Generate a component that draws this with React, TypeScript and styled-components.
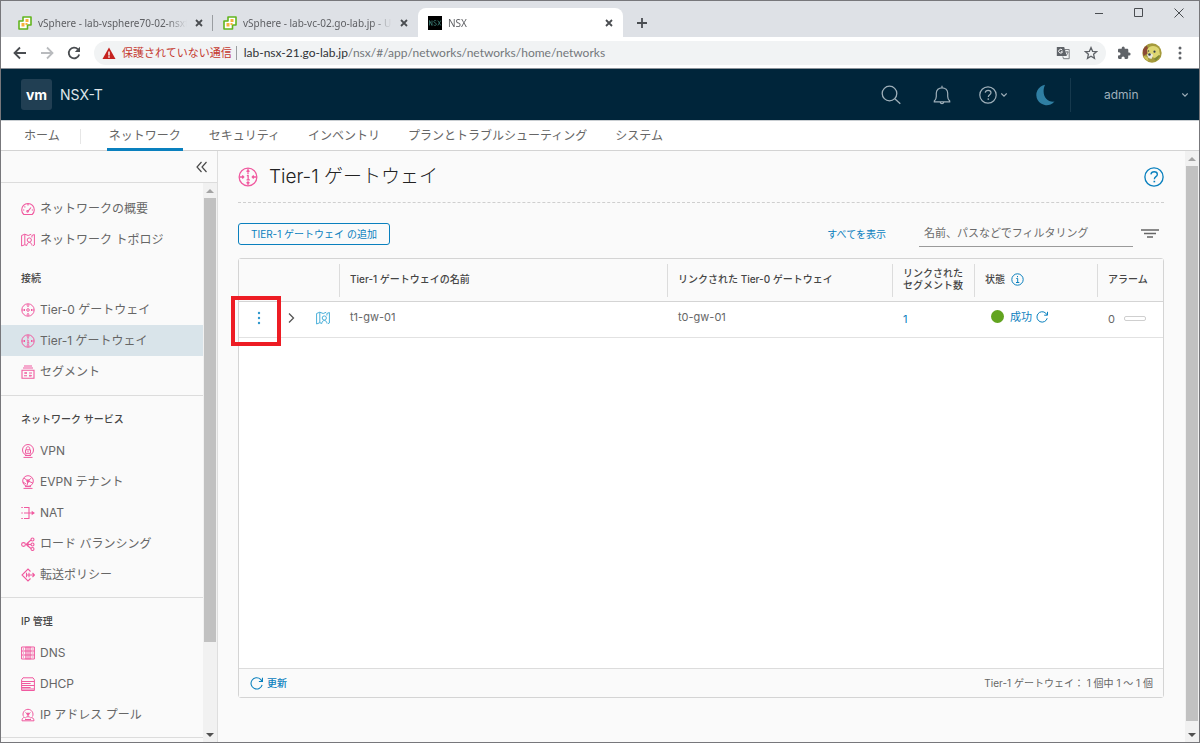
import React from "react";
import styled, { createGlobalStyle } from "styled-components";

const uiFont = `Inter, "Noto Sans CJK JP", sans-serif`;
const chromeFont = `"Noto Sans", "Noto Sans CJK JP", sans-serif`;
const urlFont = `Lato, "Noto Sans CJK JP", sans-serif`;

const c = {
  frame: "#77777b",
  strip: "#dee1e6",
  header: "#00253a",
  page: "#fafafa",
  line: "#dcdcdc",
  text: "#666",
  strong: "#454545",
  blue: "#0a80be",
  sky: "#49afd9",
  pink: "#f0599f",
};

const GlobalStyle = createGlobalStyle`
  *, *::before, *::after { box-sizing: border-box; }
  html, body { margin: 0; padding: 0; }
  body { font-family: ${uiFont}; font-size: 12px; color: ${c.text}; overflow: hidden; }
  button, input { font: inherit; color: inherit; margin: 0; }
  button { background: none; border: 0; padding: 0; }
  a { text-decoration: none; color: inherit; }
  svg { display: block; flex: none; }
`;

/* ---------- browser window ---------- */

const Window = styled.div`
  height: 100vh;
  display: flex;
  flex-direction: column;
  border: 1px solid ${c.frame};
  background: ${c.page};
`;

const TabStrip = styled.div`
  height: 36px;
  flex: none;
  display: flex;
  align-items: flex-end;
  background: ${c.strip};
  padding-left: 7px;
  font-family: ${chromeFont};
  font-size: 10px;
`;

const Tab = styled.div<{ $active?: boolean; $divided?: boolean }>`
  position: relative;
  width: 205px;
  height: 29px;
  display: flex;
  align-items: center;
  gap: 6px;
  padding: 0 8px 0 10px;
  border-radius: 8px 8px 0 0;
  background: ${(p) => (p.$active ? "#fff" : "transparent")};
  &::after {
    content: "";
    display: ${(p) => (p.$divided ? "block" : "none")};
    position: absolute;
    right: 0;
    top: 7px;
    height: 16px;
    border-right: 1px solid #9a9da1;
  }
`;

const TabTitle = styled.span`
  flex: 1;
  min-width: 0;
  white-space: nowrap;
  line-height: 16px;
  color: #5f6064;
  mask-image: linear-gradient(to right, #000 calc(100% - 20px), transparent);
`;

const ChromeButton = styled.button<{ $w?: number }>`
  display: flex;
  align-items: center;
  justify-content: center;
  width: ${(p) => p.$w ?? 12}px;
  height: 16px;
  color: #4a4d51;
`;

const NewTab = styled(ChromeButton)`
  margin: 0 0 6px 13px;
`;

const WindowControls = styled.div`
  margin-left: auto;
  align-self: flex-start;
  display: flex;
  padding-top: 4px;
`;

const Toolbar = styled.div`
  height: 32px;
  flex: none;
  display: flex;
  align-items: center;
  background: #fff;
  border-bottom: 1px solid #8b9199;
  padding: 0 9px 0 5px;
  font-family: ${chromeFont};
`;

const Omnibox = styled.div`
  flex: 1;
  height: 24px;
  margin: 0 8px 0 7px;
  padding: 0 1px 0 8px;
  display: flex;
  align-items: center;
  border-radius: 12px;
  background: #f1f3f4;
`;

const Insecure = styled.span`
  font-size: 11px;
  line-height: 20px;
  color: #c5392f;
  margin: 0 4px 0 6px;
`;

const OmniDivider = styled.span`
  width: 1px;
  height: 14px;
  margin-right: 7px;
  background: #9a9da1;
`;

const Url = styled.span`
  flex: 1;
  font-family: ${urlFont};
  font-size: 12px;
  line-height: 20px;
  color: #73777b;
  white-space: nowrap;
  b { font-weight: 400; color: #303236; }
`;

/* ---------- application header ---------- */

const Header = styled.header`
  height: 52px;
  flex: none;
  display: flex;
  align-items: center;
  background: ${c.header};
  border-bottom: 1px solid #c9ced2;
  padding-left: 20px;
  color: #9fb0ba;
`;

const Logo = styled.span`
  width: 31px;
  height: 31px;
  display: grid;
  place-items: center;
  border-radius: 3px;
  background: #213f53;
  color: #fff;
  font-size: 14px;
  line-height: 16px;
  font-weight: 700;
`;

const Product = styled.span`
  margin-left: 8px;
  flex: 1;
  font-size: 14px;
  line-height: 20px;
  color: #dfe5e9;
`;

const HeaderButton = styled.button<{ $w?: number }>`
  width: ${(p) => p.$w ?? 51}px;
  height: 34px;
  display: flex;
  align-items: center;
  justify-content: center;
  gap: 4px;
`;

const UserButton = styled.button`
  width: 129px;
  height: 34px;
  display: flex;
  align-items: center;
  justify-content: space-between;
  border-left: 1px solid #16394d;
  padding: 0 11px 0 33px;
  font-size: 12px;
`;

const MainNav = styled.nav`
  height: 30px;
  flex: none;
  display: flex;
  gap: 24px;
  padding-left: 21px;
  background: #fff;
  border-bottom: 1px solid #d3d3d3;
`;

const NavLink = styled.a<{ $active?: boolean; $home?: boolean }>`
  position: relative;
  height: 30px;
  line-height: 30px;
  font-size: 12px;
  color: #666;
  box-shadow: ${(p) => (p.$active ? `inset 0 -3px ${c.blue}` : "none")};
  padding: 0 2px;
  margin-right: ${(p) => (p.$home ? 21 : 0)}px;
  &::after {
    content: "";
    display: ${(p) => (p.$home ? "block" : "none")};
    position: absolute;
    left: 58px;
    top: 8px;
    height: 15px;
    border-left: 1px solid #e6e6e6;
  }
`;

/* ---------- body ---------- */

const Body = styled.div`
  flex: 1;
  min-height: 0;
  display: flex;
`;

const Sidebar = styled.aside`
  width: 217px;
  flex: none;
  display: flex;
  flex-direction: column;
  border-right: 1px solid #dedede;
`;

const Collapse = styled.button`
  height: 32px;
  flex: none;
  display: flex;
  align-items: center;
  justify-content: flex-end;
  padding-right: 9px;
  border-bottom: 1px solid ${c.line};
  color: #4a4a4a;
`;

const SideScroll = styled.div`
  flex: 1;
  min-height: 0;
  display: flex;
`;

const SideList = styled.div`
  flex: 1;
  overflow: hidden;
  padding-top: 10px;
`;

const Section = styled.section`
  padding-bottom: 8px;
  & + & { border-top: 1px solid ${c.line}; padding-bottom: 7px; }
`;

const SideHeading = styled.h2`
  margin: 0;
  height: 39px;
  padding: 15px 0 0 20px;
  font-size: 10px;
  line-height: 16px;
  font-weight: 500;
  color: ${c.strong};
`;

const SideItem = styled.a<{ $active?: boolean }>`
  height: 31px;
  display: flex;
  align-items: center;
  gap: 5px;
  padding-left: 20px;
  font-size: 12px;
  line-height: 20px;
  background: ${(p) => (p.$active ? "#d9e4ea" : "transparent")};
  svg { color: ${c.pink}; }
`;

const Track = styled.div`
  width: 14px;
  flex: none;
  display: flex;
  flex-direction: column;
  background: #f1f1f1;
`;

const Arrow = styled.span<{ $down?: boolean }>`
  height: 15px;
  flex: none;
  display: grid;
  place-items: center;
  color: ${(p) => (p.$down ? "#505050" : "#a3a3a3")};
`;

const Rail = styled.div`
  flex: 1;
  padding: 0 1px;
`;

const Thumb = styled.div<{ $share: number }>`
  height: ${(p) => p.$share}%;
  background: #c1c1c1;
`;

const Main = styled.main`
  flex: 1;
  min-width: 0;
  display: flex;
  flex-direction: column;
  padding: 0 21px 44px 20px;
`;

const TitleBar = styled.div`
  height: 52px;
  flex: none;
  display: flex;
  align-items: center;
  border-bottom: 1px dashed #cfcfcf;
  svg { color: ${c.pink}; }
  button svg { color: ${c.blue}; }
`;

const Title = styled.h1`
  flex: 1;
  margin: 0 0 0 11px;
  font-size: 19px;
  line-height: 24px;
  font-weight: 300;
  color: #222;
`;

const Actions = styled.div`
  height: 55px;
  flex: none;
  display: flex;
  align-items: center;
  padding-top: 6px;
`;

const AddButton = styled.button`
  height: 22px;
  padding: 0 12px;
  border: 1px solid ${c.blue};
  border-radius: 3px;
  color: ${c.blue};
  font-size: 10px;
  line-height: 20px;
  margin-right: auto;
`;

const ShowAll = styled.a`
  color: ${c.blue};
  font-size: 10px;
  line-height: 20px;
  margin-right: 33px;
`;

const Filter = styled.input`
  width: 214px;
  height: 26px;
  border: 0;
  border-bottom: 1px solid #9a9a9a;
  background: transparent;
  padding: 0 5px;
  margin-right: 3px;
  outline: 0;
  font-size: 11px;
  &::placeholder { color: #6a6a6a; opacity: 1; }
`;

const Panel = styled.div`
  flex: 1;
  min-height: 0;
  display: flex;
  flex-direction: column;
  justify-content: space-between;
  border: 1px solid #d4d4d4;
  border-radius: 3px;
  background: #fff;
`;

const Grid = styled.table`
  width: 100%;
  table-layout: fixed;
  border-collapse: separate;
  border-spacing: 0;
`;

const Th = styled.th<{ $w?: number }>`
  position: relative;
  width: ${(p) => (p.$w ? `${p.$w}px` : "auto")};
  height: 43px;
  padding: 0 0 2px 10px;
  text-align: left;
  font-size: 10px;
  line-height: 12px;
  font-weight: 500;
  color: ${c.strong};
  background: ${c.page};
  border-bottom: 1px solid #d4d4d4;
  &:not(:last-child)::after {
    content: "";
    position: absolute;
    right: 0;
    top: 5px;
    bottom: 4px;
    border-right: 1px solid ${c.line};
  }
`;

const Td = styled.td<{ $drop?: number }>`
  position: relative;
  height: 36px;
  padding: 0 0 ${(p) => p.$drop ?? 6}px 10px;
  font-size: 11px;
  line-height: 16px;
  border-bottom: 1px solid #e2e2e2;
`;

const Inline = styled.div<{ $gap?: number; $pad?: number }>`
  display: flex;
  align-items: center;
  gap: ${(p) => p.$gap ?? 6}px;
  padding-left: ${(p) => p.$pad ?? 0}px;
`;

const RowButton = styled.button<{ $w: number; $color: string }>`
  width: ${(p) => p.$w}px;
  height: 20px;
  display: flex;
  align-items: center;
  justify-content: center;
  color: ${(p) => p.$color};
`;

const Highlight = styled.span`
  position: absolute;
  left: -8px;
  top: -6px;
  width: 50px;
  height: 50px;
  border: 4px solid #ed1c24;
  z-index: 1;
  pointer-events: none;
`;

const BlueLink = styled.a`
  color: ${c.blue};
`;

const StatusDot = styled.span`
  width: 13px;
  height: 13px;
  border-radius: 50%;
  background: #62a420;
`;

const AlarmBar = styled.span`
  width: 22px;
  height: 5px;
  border: 1px solid #cfcfcf;
  border-radius: 2px;
`;

const Footer = styled.div`
  height: 29px;
  display: flex;
  align-items: center;
  justify-content: space-between;
  padding: 0 10px 0 11px;
  border-top: 1px solid #dcdcdc;
  background: ${c.page};
  font-size: 10px;
  line-height: 16px;
`;

const Refresh = styled.button`
  display: flex;
  align-items: center;
  gap: 4px;
  color: ${c.blue};
  font-weight: 500;
`;

/* ---------- icons ---------- */

type IconProps = { s?: number; w?: number; children: React.ReactNode; box?: number };

const Icon = ({ s = 14, w = 1, box, children }: IconProps) => (
  <svg
    width={s}
    height={s}
    viewBox={`0 0 ${box ?? s} ${box ?? s}`}
    fill="none"
    stroke="currentColor"
    strokeWidth={w}
    aria-hidden="true"
  >
    {children}
  </svg>
);

const CloseIcon = () => (
  <Icon s={8} w={1.8}><path d="M1 1l6 6M7 1L1 7" /></Icon>
);

const VSphereIcon = () => (
  <Icon s={14} w={1.6}>
    <path d="M5 1h8v8H9.500v4H1V5h4z" fill="#fff" stroke="#62b51e" strokeLinejoin="round" />
    <path d="M7.500 3h3v3h-3zM7.500 7h2v2h-2zM3.500 7h3v3.500h-3z" fill="#f7b23c" stroke="none" />
  </Icon>
);

const NsxIcon = () => (
  <svg width="14" height="14" viewBox="0 0 14 14" aria-hidden="true">
    <rect width="14" height="14" fill="#000" />
    <path d="M1.500 9.500v-5l2.500 5v-5M8.300 5c-1-.9-2.600-.5-2.500.7.100 1.400 2.600 1 2.600 2.500 0 1.300-1.800 1.600-2.800.7M9.800 4.500l3 5M12.800 4.500l-3 5" stroke="#3f8178" strokeWidth=".8" fill="none" />
  </svg>
);

const ArrowLeft = () => <Icon s={14} w={1.8}><path d="M13 7H2M7 1.500L1.500 7 7 12.500" /></Icon>;
const ArrowRight = () => <Icon s={14} w={1.8}><path d="M1 7h11M7 1.500L12.500 7 7 12.500" stroke="#b9bbbe" /></Icon>;
const ReloadIcon = () => (
  <Icon s={14} w={1.8}>
    <path d="M12.200 8.500A5.300 5.300 0 1 1 11 3.400" />
    <path d="M13 .8V6H7.800z" fill="currentColor" stroke="none" />
  </Icon>
);
const WarnIcon = () => (
  <Icon s={14}>
    <path d="M7 1.500L13.500 13H.5z" fill="#c5221f" stroke="none" />
    <path d="M7 5.500v4M7 10.300v1.500" stroke="#fff" strokeWidth="1.400" />
  </Icon>
);
const TranslateIcon = () => (
  <Icon s={14}>
    <path d="M.8 1h7.400l2.600 9H.8z" fill="#5f6368" stroke="none" />
    <path d="M9 3.500h4.200v9.200H7.500L6.800 10.500M9.500 6h3M11 5v1M12 6c-.4 2-1.400 3-2 3.400" stroke="#7b7e82" />
    <path d="M6.300 4.200a1.900 1.900 0 1 0 .2 1.600H4.900" stroke="#fff" />
  </Icon>
);
const StarIcon = () => (
  <Icon s={14} w={1.3}><path d="M7 1.600l1.600 3.700 4 .3-3 2.700.9 4L7 10.200l-3.500 2.100.9-4-3-2.700 4-.3z" stroke="#5f6368" /></Icon>
);
const PuzzleIcon = () => (
  <Icon s={14}>
    <path d="M12.200 6.500h-.9V4c0-.7-.5-1.200-1.200-1.200H7.700v-.9a1.500 1.500 0 0 0-3 0v.9H2.200C1.500 2.800 1 3.300 1 4v2.200h.9a1.600 1.600 0 0 1 0 3.300H1v2.300c0 .7.500 1.200 1.200 1.200h2.300v-.9a1.600 1.600 0 0 1 3.200 0v.9H10c.7 0 1.200-.5 1.200-1.200V9.500h.9a1.500 1.500 0 0 0 0-3z" fill="#5f6368" stroke="none" />
  </Icon>
);
const AvatarIcon = () => (
  <svg width="20" height="20" viewBox="0 0 20 20" aria-hidden="true">
    <circle cx="10" cy="10" r="9.700" fill="#a59a3c" />
    <path d="M.8 7a10 10 0 0 1 4-4.500l2 4.500-2 4-3.500 2z" fill="#8b4a36" />
    <path d="M5 7c2-5 9-5 12-1l1 6-5 3-7-2z" fill="#ddd672" />
    <path d="M5 12c1-2 5-2 6 0l-1.500 4-3-1z" fill="#e8e7dc" />
    <path d="M1.500 13l4 1 1 4a9.700 9.700 0 0 1-5-5z" fill="#cfc45a" />
    <circle cx="7.500" cy="11.500" r="1.300" fill="#33404a" />
    <circle cx="12.500" cy="8.700" r="1.100" fill="#33404a" />
    <circle cx="6.500" cy="8" r=".8" fill="#4a4a3a" />
    <path d="M12 16l5-4 1 1-4 5z" fill="#7e8b35" />
  </svg>
);
const Dots = ({ color, r = 1.5, gap = 5 }: { color: string; r?: number; gap?: number }) => (
  <svg width="4" height="16" viewBox="0 0 4 16" fill={color} aria-hidden="true">
    <circle cx="2" cy={8 - gap} r={r} />
    <circle cx="2" cy="8" r={r} />
    <circle cx="2" cy={8 + gap} r={r} />
  </svg>
);

const SearchIcon = () => (
  <Icon s={20} w={1.3}><circle cx="8.500" cy="8.500" r="7.300" /><path d="M13.800 13.800l5.500 5" /></Icon>
);
const BellIcon = () => (
  <Icon s={20} w={1.2}>
    <path d="M2.300 16c1.300-1.200 2-2.300 2-4.500V8.200C4.300 5 6.800 2.800 10 2.800s5.700 2.200 5.700 5.400v3.300c0 2.200.7 3.300 2 4.500v.9H2.300zM10 .8v2M8.300 17.500c.3 1.500 3.100 1.500 3.400 0" />
  </Icon>
);
const HelpIcon = ({ s = 18 }: { s?: number }) => (
  <Icon s={s} box={18} w={1.2}>
    <circle cx="9" cy="9" r="8.200" />
    <path d="M6.200 6.600c.3-1.500 1.400-2.300 2.900-2.300 1.700 0 2.900 1 2.900 2.400 0 2-2.700 2-2.700 4.300" />
    <path d="M9.300 12.400v1.400" strokeWidth="1.500" />
  </Icon>
);
const ChevronDown = () => <Icon s={6} w={1.2}><path d="M.3 1.500L3 4.200l2.700-2.700" /></Icon>;
const MoonIcon = () => (
  <Icon s={22}><path d="M11 .8A10.300 10.300 0 1 0 20.500 17.600C12 18.500 7 10 11 .8z" fill="#2f7fa3" stroke="none" /></Icon>
);

const GaugeIcon = () => (
  <Icon w={1.1}><path d="M2.800 12.500h8.400a6.300 6.300 0 1 0-8.400 0zM7.300 8.800L10 5.500M7 2v1.600M2 8h1.300M3.500 4.500l.8.8M10.800 8H12" /><circle cx="6.600" cy="9.300" r=".8" /></Icon>
);
const MapIcon = () => (
  <Icon>
    <path d="M.6 2.500L3.800 1.200v10.500L.6 13zM13.400 1.500l-2.500 1v2M3.800 1.200l3.400 1.300 3-1.200M3.800 11.700l2 .8M13.400 1.500V12l-1.500.7" />
    <circle cx="8.300" cy="7" r="2.100" /><path d="M5.800 12.500c.2-4 4.900-4 5.200 0" />
  </Icon>
);
const RouterIcon = ({ one, s = 14 }: { one?: boolean; s?: number }) => (
  <Icon s={s} box={14} w={s > 14 ? 0.9 : 1}>
    <circle cx="7" cy="7" r="6.200" />
    {one ? <path d="M6.200 6h.9v3M6 9h2.300M7 4.200v.9" /> : <circle cx="7" cy="7" r="1.300" />}
    <path d="M7 1v2.500M7 10.500V13M6 2.600l1 1 1-1M6 11.400l1-1 1 1M1 7h3M10 7h3M3 6l1 1-1 1M11 6l-1 1 1 1" />
  </Icon>
);
const SegmentIcon = () => (
  <Icon w={1.1}><path d="M3 1h8M2 3h10M1 5.200h12v8H1zM3 8h3M8 8h3M3 10.800h3M8 10.800h3M5 7v2M9 9.800v2" /></Icon>
);
const VpnIcon = () => (
  <Icon><circle cx="7" cy="6" r="5.500" /><path d="M4.500 5.800h5v3.500h-5zM5.300 5.500V4.300c0-2 3.400-2 3.400 0v1.200M7 6.800v1.400M4 11.500h6M2.500 13.400h9" /></Icon>
);
const EvpnIcon = () => (
  <Icon><circle cx="7" cy="6" r="5.300" /><path d="M3 3l4 3 3.500-3.200M7 6l-1 4.500M7 6l4.800 2M2 7l3 2M4 11.600h6M2.500 13.400h9" /><circle cx="7" cy="6" r="1.200" fill="currentColor" /></Icon>
);
const NatIcon = () => (
  <Icon w={1.1}><path d="M3 1.500h5v11H3M.3 1.500h1.500M.3 7h1.500M3 7h10.300M.3 12.500h1.500" /><path d="M10.700 4.800L13.700 7l-3 2.200z" fill="currentColor" stroke="none" /></Icon>
);
const BalanceIcon = () => (
  <Icon w={1.1}><circle cx="2.500" cy="7.500" r="1.900" /><circle cx="11.500" cy="2.500" r="1.500" /><circle cx="11.500" cy="7.500" r="1.500" /><circle cx="11.500" cy="12" r="1.500" /><path d="M5 7.500h5M5.500 7l4.500-4M5.500 8l4.500 3.500M8 5.500L5.500 7.500 8 9.500" /></Icon>
);
const ForwardIcon = () => (
  <Icon w={1.1}><path d="M9.500 3.500L7 1 1 7l6 6 2.500-2.500M5.500 4.800v4.400M8 4.800v4.400M5.500 7h8M11.500 5l2 2-2 2" /></Icon>
);
const DnsIcon = () => (
  <Icon><path d="M.6 1h12.800v12H.6zM.6 5h12.800M.6 9h12.800" /><path d="M4.500 1H9.800v12H4.500z" fill="currentColor" fillOpacity=".5" strokeWidth=".5" /><path d="M2 3h1M2 7h1M2 11h1M11.300 3h1M11.300 7h1M11.300 11h1" /></Icon>
);
const DhcpIcon = () => (
  <Icon><path d="M2 .8h10l1.400 2v10.700H.6V2.800zM.6 4.500h12.800M.6 8.500h12.800M.6 10.500h9M.6 6.500h9M.6 12h12.800" /></Icon>
);
const PoolIcon = () => (
  <Icon><path d="M2.500 8.500a5 5 0 1 1 9 0M1 12.800c0-3 2-4 3.500-3 1-1.500 4-1.500 5 0 1.700-.8 3.500.5 3.500 3zM4.500 4.500l2.500 2 2.500-2M7 6.500v1.800" /><circle cx="7" cy="6" r="1" fill="currentColor" /><path d="M4 11.500h6" /></Icon>
);
const RefreshIcon = ({ s = 12 }: { s?: number }) => (
  <Icon s={s} box={12}><path d="M11.200 7.200A5.200 5.200 0 1 1 9.800 2.200L11.300 4M11.500.8V4.200H8.200" /></Icon>
);
const InfoIcon = () => (
  <Icon s={13}><circle cx="6.500" cy="6.500" r="5.700" /><path d="M5.300 5.500h1.400v3.800M5 9.500h3.300M6.500 3v1.200" /></Icon>
);

const ScrollBar = ({ share }: { share: number }) => (
  <Track aria-hidden="true">
    <Arrow><svg width="8" height="4"><path d="M0 4l4-4 4 4z" fill="currentColor" /></svg></Arrow>
    <Rail><Thumb $share={share} /></Rail>
    <Arrow $down><svg width="8" height="4"><path d="M0 0l4 4 4-4z" fill="currentColor" /></svg></Arrow>
  </Track>
);

/* ---------- data ---------- */

const navItems = ["ホーム", "ネットワーク", "セキュリティ", "インベントリ", "プランとトラブルシューティング", "システム"];

type Item = { label: string; icon: React.ReactNode; active?: boolean };
type Group = { heading?: string; items: Item[] };

const sections: Group[][] = [
  [
    { items: [
      { label: "ネットワークの概要", icon: <GaugeIcon /> },
      { label: "ネットワーク トポロジ", icon: <MapIcon /> },
    ] },
    { heading: "接続", items: [
      { label: "Tier-0 ゲートウェイ", icon: <RouterIcon /> },
      { label: "Tier-1 ゲートウェイ", icon: <RouterIcon one />, active: true },
      { label: "セグメント", icon: <SegmentIcon /> },
    ] },
  ],
  [
    { heading: "ネットワーク サービス", items: [
      { label: "VPN", icon: <VpnIcon /> },
      { label: "EVPN テナント", icon: <EvpnIcon /> },
      { label: "NAT", icon: <NatIcon /> },
      { label: "ロード バランシング", icon: <BalanceIcon /> },
      { label: "転送ポリシー", icon: <ForwardIcon /> },
    ] },
  ],
  [
    { heading: "IP 管理", items: [
      { label: "DNS", icon: <DnsIcon /> },
      { label: "DHCP", icon: <DhcpIcon /> },
      { label: "IP アドレス プール", icon: <PoolIcon /> },
    ] },
  ],
  [],
];

const tabs = [
  { title: "vSphere - lab-vsphere70-02-nsxt", icon: <VSphereIcon />, divided: true },
  { title: "vSphere - lab-vc-02.go-lab.jp - U", icon: <VSphereIcon /> },
  { title: "NSX", icon: <NsxIcon />, active: true },
];

export default function App() {
  return (
    <>
      <GlobalStyle />
      <Window>
        <TabStrip>
          {tabs.map((t) => (
            <Tab key={t.title} $active={t.active} $divided={t.divided}>
              {t.icon}
              <TabTitle>{t.title}</TabTitle>
              <ChromeButton aria-label="閉じる"><CloseIcon /></ChromeButton>
            </Tab>
          ))}
          <NewTab aria-label="新しいタブ"><Icon s={12} w={1.8}><path d="M6 1v10M1 6h10" /></Icon></NewTab>
          <WindowControls>
            <ChromeButton $w={40} aria-label="最小化"><Icon s={10}><path d="M1 5.500h8" /></Icon></ChromeButton>
            <ChromeButton $w={40} aria-label="最大化"><Icon s={10}><path d="M.5.5h8v8h-8z" /></Icon></ChromeButton>
            <ChromeButton $w={40} aria-label="ウィンドウを閉じる"><Icon s={10}><path d="M.5.500l9 9M9.500.500l-9 9" /></Icon></ChromeButton>
          </WindowControls>
        </TabStrip>
        <Toolbar>
          <ChromeButton $w={27} aria-label="戻る"><ArrowLeft /></ChromeButton>
          <ChromeButton $w={27} aria-label="進む"><ArrowRight /></ChromeButton>
          <ChromeButton $w={27} aria-label="再読み込み"><ReloadIcon /></ChromeButton>
          <Omnibox>
            <WarnIcon />
            <Insecure>保護されていない通信</Insecure>
            <OmniDivider />
            <Url><b>lab-nsx-21.go-lab.jp</b>/nsx/#/app/networks/networks/home/networks</Url>
            <ChromeButton $w={28} aria-label="翻訳"><TranslateIcon /></ChromeButton>
            <ChromeButton $w={28} aria-label="ブックマーク"><StarIcon /></ChromeButton>
          </Omnibox>
          <ChromeButton $w={20} aria-label="拡張機能"><PuzzleIcon /></ChromeButton>
          <ChromeButton $w={36} aria-label="プロフィール"><AvatarIcon /></ChromeButton>
          <ChromeButton $w={20} aria-label="メニュー"><Dots color="#5f6368" /></ChromeButton>
        </Toolbar>

        <Header>
          <Logo>vm</Logo>
          <Product>NSX-T</Product>
          <HeaderButton aria-label="検索"><SearchIcon /></HeaderButton>
          <HeaderButton aria-label="通知"><BellIcon /></HeaderButton>
          <HeaderButton $w={52} aria-label="ヘルプ"><HelpIcon /><ChevronDown /></HeaderButton>
          <HeaderButton aria-label="ダーク モード"><MoonIcon /></HeaderButton>
          <UserButton>admin<ChevronDown /></UserButton>
        </Header>
        <MainNav>
          {navItems.map((n, i) => (
            <NavLink key={n} href="#" $home={i === 0} $active={i === 1}>{n}</NavLink>
          ))}
        </MainNav>

        <Body>
          <Sidebar>
            <Collapse aria-label="サイドバーを折りたたむ">
              <Icon s={12} w={1.2}><path d="M5.500 1L1 6l4.500 5M10.500 1L6 6l4.500 5" /></Icon>
            </Collapse>
            <SideScroll>
              <SideList>
                {sections.map((groups, i) => (
                  <Section key={i}>
                    {groups.map((g, j) => (
                      <React.Fragment key={j}>
                        {g.heading && <SideHeading>{g.heading}</SideHeading>}
                        {g.items.map((it) => (
                          <SideItem key={it.label} href="#" $active={it.active}>
                            {it.icon}
                            {it.label}
                          </SideItem>
                        ))}
                      </React.Fragment>
                    ))}
                  </Section>
                ))}
              </SideList>
              <ScrollBar share={84} />
            </SideScroll>
          </Sidebar>

          <Main>
            <TitleBar>
              <RouterIcon one s={20} />
              <Title>Tier-1 ゲートウェイ</Title>
              <button aria-label="ヘルプ"><HelpIcon s={20} /></button>
            </TitleBar>
            <Actions>
              <AddButton>TIER-1 ゲートウェイ の追加</AddButton>
              <ShowAll href="#">すべてを表示</ShowAll>
              <Filter aria-label="フィルタ" placeholder="名前、パスなどでフィルタリング" />
              <RowButton $w={28} $color="#666" aria-label="フィルタ オプション">
                <Icon s={18} w={1.5}><path d="M0 5h18M3 8.500h12M6 12h6" /></Icon>
              </RowButton>
            </Actions>
            <Panel>
              <Grid>
                <thead>
                  <tr>
                    <Th $w={101} />
                    <Th>Tier-1 ゲートウェイの名前</Th>
                    <Th $w={225}>リンクされた Tier-0 ゲートウェイ</Th>
                    <Th $w={82}>リンクされた<br />セグメント数</Th>
                    <Th $w={123}><Inline>状態<BlueLink href="#" aria-label="情報"><InfoIcon /></BlueLink></Inline></Th>
                    <Th $w={65}>アラーム</Th>
                  </tr>
                </thead>
                <tbody>
                  <tr>
                    <Td $drop={4}>
                      <Highlight />
                      <Inline $gap={12}>
                        <RowButton $w={20} $color={c.blue} aria-label="操作"><Dots color="#2f97cc" r={1.2} /></RowButton>
                        <RowButton $w={20} $color="#555" aria-label="展開"><Icon s={10} w={1.3}><path d="M3 .5L7.500 5 3 9.500" /></Icon></RowButton>
                        <RowButton $w={20} $color={c.sky} aria-label="トポロジ"><MapIcon /></RowButton>
                      </Inline>
                    </Td>
                    <Td>t1-gw-01</Td>
                    <Td>t0-gw-01</Td>
                    <Td $drop={2}><BlueLink href="#">1</BlueLink></Td>
                    <Td>
                      <Inline $pad={6}>
                        <StatusDot />
                        <BlueLink href="#">成功</BlueLink>
                        <RowButton $w={8} $color={c.blue} aria-label="状態の更新"><RefreshIcon /></RowButton>
                      </Inline>
                    </Td>
                    <Td $drop={2}><Inline $gap={9}>0<AlarmBar /></Inline></Td>
                  </tr>
                </tbody>
              </Grid>
              <Footer>
                <Refresh><RefreshIcon s={13} />更新</Refresh>
                <span>Tier-1 ゲートウェイ： 1 個中 1 ～ 1 個</span>
              </Footer>
            </Panel>
          </Main>
          <ScrollBar share={99} />
        </Body>
      </Window>
    </>
  );
}
